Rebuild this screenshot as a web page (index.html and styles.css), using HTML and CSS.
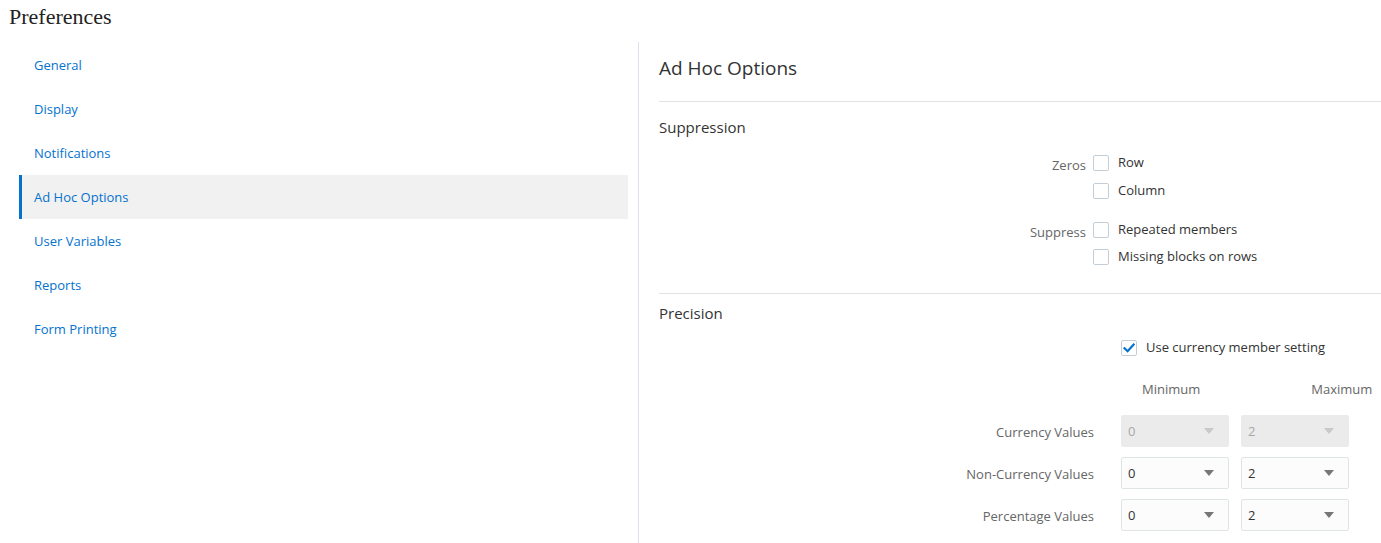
FILE: index.html
```html
<!DOCTYPE html>
<html>
<head>
<meta charset="utf-8">
<link rel="stylesheet" href="styles.css">
</head>
<body>
<header class="page-head"><h1>Preferences</h1></header>
<div class="layout">
  <nav class="sidebar">
    <a class="nav-item">General</a>
    <a class="nav-item">Display</a>
    <a class="nav-item">Notifications</a>
    <a class="nav-item active">Ad Hoc Options</a>
    <a class="nav-item">User Variables</a>
    <a class="nav-item">Reports</a>
    <a class="nav-item">Form Printing</a>
  </nav>
  <main class="panel">
    <h2 class="panel-title">Ad Hoc Options</h2>
    <section class="section">
      <h3 class="section-title">Suppression</h3>
      <div class="check-grid">
        <div class="check-label">Zeros</div>
        <div class="check-list">
          <label class="check"><span class="box"></span>Row</label>
          <label class="check"><span class="box"></span>Column</label>
        </div>
        <div class="check-label second">Suppress</div>
        <div class="check-list second">
          <label class="check"><span class="box"></span>Repeated members</label>
          <label class="check"><span class="box"></span>Missing blocks on rows</label>
        </div>
      </div>
    </section>
    <section class="section precision">
      <h3 class="section-title">Precision</h3>
      <div class="prec-grid">
        <div></div>
        <label class="check currency"><span class="box checked"><svg viewBox="0 0 16 16" width="16" height="16"><path d="M3.5 8.2 L6.6 11.2 L12.6 4.6" fill="none" stroke="#0572ce" stroke-width="2.2" stroke-linecap="square"/></svg></span>Use currency member setting</label>
        <div></div>
        <div class="col-heads"><span class="h-min">Minimum</span><span class="h-max">Maximum</span></div>
        <div class="row-label">Currency Values</div>
        <div class="selects"><div class="select disabled"><span>0</span><i class="caret"></i></div><div class="select disabled"><span>2</span><i class="caret"></i></div></div>
        <div class="row-label">Non-Currency Values</div>
        <div class="selects"><div class="select"><span>0</span><i class="caret"></i></div><div class="select"><span>2</span><i class="caret"></i></div></div>
        <div class="row-label">Percentage Values</div>
        <div class="selects"><div class="select"><span>0</span><i class="caret"></i></div><div class="select"><span>2</span><i class="caret"></i></div></div>
      </div>
    </section>
  </main>
</div>
</body>
</html>
```

FILE: styles.css
```css
* { box-sizing: border-box; }
html, body { margin: 0; padding: 0; background: #fff; }
body {
  font-family: "Open Sans", "Noto Sans", sans-serif;
  font-size: 13px;
  color: #333;
  overflow: hidden;
  height: 543px;
}
.page-head { height: 42px; padding: 5px 0 0 9px; }
.page-head h1 {
  margin: 0;
  font-family: "Liberation Serif", serif;
  font-weight: normal;
  font-size: 22px;
  line-height: 24px;
  color: #222;
}
.layout { display: flex; height: 501px; }
.sidebar {
  width: 609px;
  flex: none;
  margin-left: 19px;
  margin-right: 10px;
  display: flex;
  flex-direction: column;
  padding-top: 1px;
}
.nav-item {
  display: flex;
  align-items: center;
  height: 44px;
  color: #0572ce;
  font-size: 13px;
  border-left: 3px solid transparent;
  padding-left: 12px;
}
.nav-item.active { background: #f1f1f1; border-left-color: #0572ce; }
.panel {
  flex: 1;
  border-left: 1px solid #dbe3ea;
  padding-left: 20px;
}
.panel-title {
  margin: 0;
  height: 60px;
  display: flex;
  align-items: center;
  font-weight: normal;
  font-size: 19px;
  color: #333;
  border-bottom: 1px solid #e2e2e2;
  padding-bottom: 8px;
}
.section { border-bottom: 1px solid #e2e2e2; padding-bottom: 28px; }
.section.precision { border-bottom: none; }
.section-title {
  margin: 0;
  font-weight: normal;
  font-size: 15px;
  line-height: 20px;
  padding-top: 15px;
  height: 43px;
  color: #333;
}
.precision .section-title { padding-top: 9px; height: 37px; }
.check-grid {
  display: grid;
  grid-template-columns: 427px auto;
  column-gap: 7px;
  margin-top: 9px;
}
.check-label { text-align: right; color: #666; padding-top: 2px; line-height: 18px; }
.check-label.second, .check-list.second { margin-top: 22px; }
.check-list { display: flex; flex-direction: column; gap: 11px; }
.check-list.second { gap: 10px; }
.check { display: flex; align-items: center; gap: 9px; line-height: 17px; color: #333; }
.box {
  width: 16px; height: 16px;
  border: 1px solid #c4ced7;
  border-radius: 2px;
  background: #fff;
  display: inline-flex;
  flex: none;
}
.box svg { margin: -1px; }
.prec-grid {
  display: grid;
  grid-template-columns: 435px auto;
  column-gap: 27px;
  row-gap: 10px;
  align-items: center;
}
.prec-grid .check.currency { gap: 9px; margin-top: 8px; }
.col-heads { display: flex; color: #666; height: 36px; align-items: center; padding-top: 9px; margin-bottom: 3px; }
.h-min { margin-left: 21px; }
.h-max { margin-left: 111px; }
.row-label { text-align: right; color: #666; padding-top: 1px; }
.selects { display: flex; gap: 12px; }
.select {
  width: 108px; height: 32px;
  border: 1px solid #dfe4e7;
  border-radius: 2px;
  background: #fcfcfc;
  display: flex; align-items: center; justify-content: space-between;
  padding: 0 14px 0 6px;
  color: #333;
}
.select.disabled { background: #ebebeb; border-color: #ebebeb; color: #a8a8a8; }
.caret { width: 0; height: 0; border-left: 5px solid transparent; border-right: 5px solid transparent; border-top: 6px solid #777; }
.select.disabled .caret { border-top-color: #c8c8c8; }
```
